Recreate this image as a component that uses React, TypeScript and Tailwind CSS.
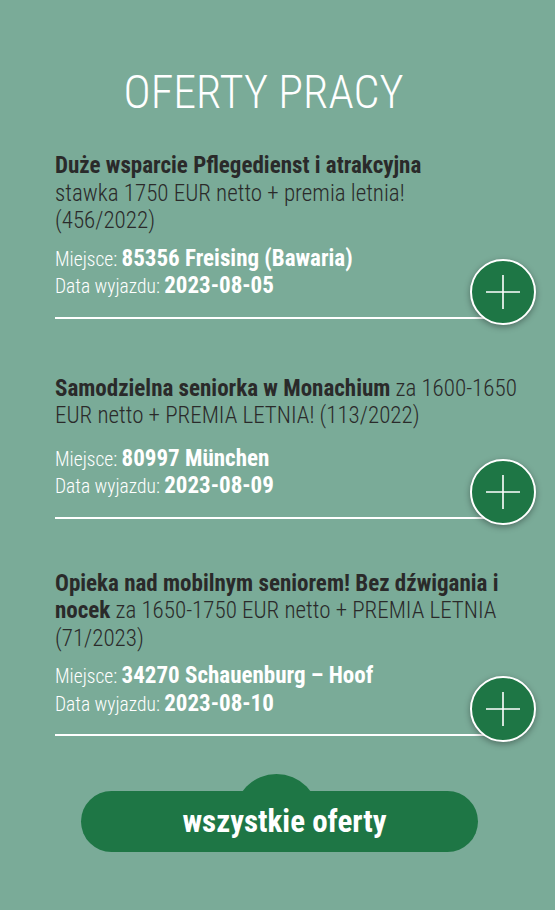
import React from 'react';

type Offer = {
  bold: string;
  rest: React.ReactNode;
  breakAfterBold?: boolean;
  place: string;
  date: string;
  gapTop: string;
  metaGap: string;
};

const offers: Offer[] = [
  {
    bold: 'Duże wsparcie Pflegedienst i atrakcyjna',
    rest: (
      <>
        stawka 1750 EUR netto + premia letnia!
        <br />
        (456/2022)
      </>
    ),
    breakAfterBold: true,
    place: '85356 Freising (Bawaria)',
    date: '2023-08-05',
    gapTop: 'mt-0',
    metaGap: 'mt-[11px]',
  },
  {
    bold: 'Samodzielna seniorka w Monachium',
    rest: 'za 1600-1650 EUR netto + PREMIA LETNIA! (113/2022)',
    place: '80997 München',
    date: '2023-08-09',
    gapTop: 'mt-[56px]',
    metaGap: 'mt-[16px]',
  },
  {
    bold: 'Opieka nad mobilnym seniorem! Bez dźwigania i nocek',
    rest: 'za 1650-1750 EUR netto + PREMIA LETNIA (71/2023)',
    place: '34270 Schauenburg – Hoof',
    date: '2023-08-10',
    gapTop: 'mt-[51px]',
    metaGap: 'mt-[11px]',
  },
];

const PlusButton: React.FC = () => (
  <div className="absolute right-[-31px] bottom-[-8px] w-[66px] h-[66px] rounded-full bg-[#1e7645] border-2 border-white shadow-[0_2px_6px_rgba(0,0,0,0.35)] flex items-center justify-center">
    <svg width="38" height="38" viewBox="0 0 38 38" fill="none">
      <path d="M19 2V36M2 19H36" stroke="white" strokeWidth="1.6" />
    </svg>
  </div>
);

const App: React.FC = () => {
  return (
    <div
      className="min-h-[910px] w-full bg-[#7aab98] pt-[64px]"
      style={{ fontFamily: '"Roboto Condensed", Roboto, "Liberation Sans Narrow", sans-serif' }}
    >
      <h1 className="text-center text-white font-light text-[46px] leading-[56px] pr-[28px]">
        OFERTY PRACY
      </h1>

      <div className="pl-[55px] mt-[32px] flex flex-col">
        {offers.map((o, i) => (
          <div key={i} className={`relative w-[450px] border-b-2 border-white pb-[16px] ${o.gapTop}`}>
            <p className="w-[470px] text-[23px] leading-[27.5px] text-[#2a2a2a] font-light">
              <strong className="font-bold">{o.bold}</strong>
              {o.breakAfterBold ? <br /> : ' '}
              {o.rest}
            </p>
            <div className={`${o.metaGap} text-white text-[19.5px] leading-[26.5px] font-light`}>
              <div>
                Miejsce: <span className="font-bold text-[23px]">{o.place}</span>
              </div>
              <div>
                Data wyjazdu: <span className="font-bold text-[23px]">{o.date}</span>
              </div>
            </div>
            <PlusButton />
          </div>
        ))}
      </div>

      <div className="relative mt-[55px] ml-[81px] w-[397px] h-[61px]">
        {/* bump on top of the pill */}
        <div className="absolute left-[153px] -top-[17px] w-[85px] h-[40px] overflow-hidden">
          <div className="w-[85px] h-[85px] rounded-full bg-[#1e7645]" />
        </div>
        <button className="relative w-full h-full rounded-full bg-[#1e7645] text-white font-bold text-[31px] leading-none pl-[10px]">
          wszystkie oferty
        </button>
      </div>
    </div>
  );
};

export default App;
